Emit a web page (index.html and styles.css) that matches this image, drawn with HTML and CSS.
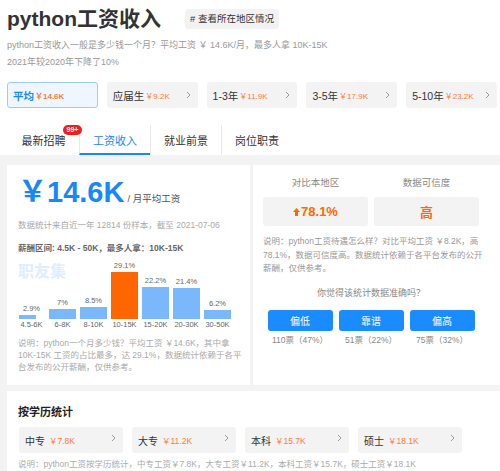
FILE: index.html
```html
<!DOCTYPE html>
<html lang="zh-CN">
<head>
<meta charset="utf-8">
<title>python工资收入</title>
<link rel="stylesheet" href="styles.css">
</head>
<body>
<div class="top">
  <div class="title-row">
    <h1 class="title">python工资收入</h1>
    <span class="tag"># 查看所在地区情况</span>
  </div>
  <p class="sub first">python工资收入一般是多少钱一个月？平均工资 ￥ 14.6K/月，最多人拿 10K-15K</p>
  <p class="sub">2021年较2020年下降了10%</p>
  <div class="filters">
    <div class="filter active"><span class="f-name">平均</span><span class="f-price">￥14.6K</span></div>
    <div class="filter"><span class="f-name">应届生</span><span class="f-price">￥9.2K</span><svg class="chev" width="5" height="8" viewBox="0 0 5 8"><polyline points="1,1 4,4 1,7" fill="none" stroke="#9a9a9a" stroke-width="1"/></svg></div>
    <div class="filter"><span class="f-name">1-3年</span><span class="f-price">￥11.9K</span><svg class="chev" width="5" height="8" viewBox="0 0 5 8"><polyline points="1,1 4,4 1,7" fill="none" stroke="#9a9a9a" stroke-width="1"/></svg></div>
    <div class="filter"><span class="f-name">3-5年</span><span class="f-price">￥17.9K</span><svg class="chev" width="5" height="8" viewBox="0 0 5 8"><polyline points="1,1 4,4 1,7" fill="none" stroke="#9a9a9a" stroke-width="1"/></svg></div>
    <div class="filter"><span class="f-name">5-10年</span><span class="f-price">￥23.2K</span><svg class="chev" width="5" height="8" viewBox="0 0 5 8"><polyline points="1,1 4,4 1,7" fill="none" stroke="#9a9a9a" stroke-width="1"/></svg></div>
  </div>
  <div class="tabs">
    <div class="tab"><span class="tab-label">最新招聘<span class="badge">99+</span></span></div>
    <div class="tab active">工资收入</div>
    <div class="tab">就业前景</div>
    <div class="tab">岗位职责</div>
  </div>
</div>
<div class="main">
  <div class="cards">
    <div class="card left">
      <div class="price-row"><span class="price"><span class="yen">￥</span>14.6K</span><span class="per">/ 月平均工资</span></div>
      <p class="meta">数据统计来自近一年 12814 份样本，截至 2021-07-06</p>
      <p class="range">薪酬区间: 4.5K - 50K，最多人拿：10K-15K</p>
      <div class="chart">
        <span class="watermark">职友集</span>
        <div class="col"><span class="val">2.9%</span><div class="bar narrow" style="height:4px"></div><span class="lab">4.5-6K</span></div>
        <div class="col"><span class="val">7%</span><div class="bar" style="height:10px"></div><span class="lab">6-8K</span></div>
        <div class="col"><span class="val">8.5%</span><div class="bar" style="height:12px"></div><span class="lab">8-10K</span></div>
        <div class="col"><span class="val">29.1%</span><div class="bar hot" style="height:47px"></div><span class="lab">10-15K</span></div>
        <div class="col"><span class="val">22.2%</span><div class="bar" style="height:32px"></div><span class="lab">15-20K</span></div>
        <div class="col"><span class="val">21.4%</span><div class="bar" style="height:31px"></div><span class="lab">20-30K</span></div>
        <div class="col"><span class="val">6.2%</span><div class="bar" style="height:9px"></div><span class="lab">30-50K</span></div>
      </div>
      <p class="note">说明：python一个月多少钱？平均工资 ￥14.6K，其中拿 10K-15K 工资的占比最多，达 29.1%，数据统计依赖于各平台发布的公开薪酬，仅供参考。</p>
    </div>
    <div class="card right">
      <div class="compare">
        <div class="cmp">
          <span class="cmp-label">对比本地区</span>
          <div class="cmp-box"><svg class="up" width="7" height="8" viewBox="0 0 7 8"><polygon points="3.5,0 7,4 5,4 5,8 2,8 2,4 0,4" fill="#ff6a00"/></svg>78.1%</div>
        </div>
        <div class="cmp">
          <span class="cmp-label">数据可信度</span>
          <div class="cmp-box">高</div>
        </div>
      </div>
      <p class="r-note">说明：python工资待遇怎么样？对比平均工资 ￥8.2K，高 78.1%，数据可信度高。数据统计依赖于各平台发布的公开薪酬，仅供参考。</p>
      <p class="question">你觉得该统计数据准确吗？</p>
      <div class="votes">
        <div class="vote"><div class="vote-btn">偏低</div><span class="vote-count">110票（47%）</span></div>
        <div class="vote"><div class="vote-btn">靠谱</div><span class="vote-count">51票（22%）</span></div>
        <div class="vote"><div class="vote-btn">偏高</div><span class="vote-count">75票（32%）</span></div>
      </div>
    </div>
  </div>
  <div class="card edu">
    <h2 class="edu-title">按学历统计</h2>
    <div class="edu-list">
      <div class="edu-item"><span class="edu-name">中专</span><span class="edu-price">￥7.8K</span><svg class="chev" width="5" height="8" viewBox="0 0 5 8"><polyline points="1,1 4,4 1,7" fill="none" stroke="#9a9a9a" stroke-width="1"/></svg></div>
      <div class="edu-item"><span class="edu-name">大专</span><span class="edu-price">￥11.2K</span><svg class="chev" width="5" height="8" viewBox="0 0 5 8"><polyline points="1,1 4,4 1,7" fill="none" stroke="#9a9a9a" stroke-width="1"/></svg></div>
      <div class="edu-item"><span class="edu-name">本科</span><span class="edu-price">￥15.7K</span><svg class="chev" width="5" height="8" viewBox="0 0 5 8"><polyline points="1,1 4,4 1,7" fill="none" stroke="#9a9a9a" stroke-width="1"/></svg></div>
      <div class="edu-item"><span class="edu-name">硕士</span><span class="edu-price">￥18.1K</span><svg class="chev" width="5" height="8" viewBox="0 0 5 8"><polyline points="1,1 4,4 1,7" fill="none" stroke="#9a9a9a" stroke-width="1"/></svg></div>
    </div>
    <p class="edu-note">说明：python工资按学历统计，中专工资￥7.8K，大专工资￥11.2K，本科工资￥15.7K，硕士工资￥18.1K</p>
  </div>
</div>
</body>
</html>
```

FILE: styles.css
```css
* { box-sizing: border-box; }
html, body { margin: 0; padding: 0; }
body {
  font-family: "Liberation Sans", "Noto Sans CJK SC", sans-serif;
  color: #333;
  background: #f3f3f3;
  overflow: hidden;
}
p { margin: 0; }

.top {
  background: #fff;
  padding: 7px 3px 0 7px;
}
.title-row {
  display: flex;
  align-items: center;
  height: 24px;
}
.title {
  margin: 0;
  font-size: 21px;
  font-weight: bold;
  line-height: 24px;
  color: #333;
}
.tag {
  margin-left: 24px;
  height: 20px;
  line-height: 20px;
  padding: 0 5px;
  font-size: 9.5px;
  color: #333;
  background: #f2f2f2;
  border-radius: 3px;
}
.sub {
  font-size: 9px;
  line-height: 17px;
  color: #999;
}
.sub.first { margin-top: 5.5px; }

.filters {
  display: flex;
  gap: 9px;
  margin-top: 11.5px;
}
.filter {
  flex: 1;
  height: 26px;
  display: flex;
  align-items: center;
  padding: 0 6px 0 5px;
  background: #f3f3f3;
  border: 1px solid transparent;
  border-radius: 3px;
}
.f-name { font-size: 10.5px; color: #333; }
.f-price { font-size: 8px; color: #ff7a3d; margin-left: 1px; }
.chev { margin-left: auto; }
.filter.active {
  background: #eef6ff;
  border-color: #9ccafb;
}
.filter.active .f-name { color: #1787fb; font-weight: bold; }
.filter.active .f-price { font-weight: bold; }

.tabs {
  display: flex;
  margin-top: 17px;
  margin-left: 1px;
  height: 30px;
}
.tab {
  width: 71px;
  display: flex;
  align-items: center;
  justify-content: center;
  font-size: 11px;
  color: #333;
}
.tab + .tab { border-left: 1px solid #e8e8e8; }
.tab.active {
  color: #1787fb;
  border-bottom: 2px solid #1787fb;
  padding-top: 2px;
}
.tab-label { position: relative; }
.badge {
  position: absolute;
  left: calc(100% - 3px);
  top: -7px;
  height: 10px;
  line-height: 10px;
  padding: 0 4px;
  border-radius: 5px;
  background: #f01e1e;
  color: #fff;
  font-size: 7px;
  font-weight: bold;
}

.main {
  padding: 10px 0 0 7px;
}
.cards {
  display: flex;
  gap: 3px;
}
.card { background: #fff; }
.card.left {
  width: 243px;
  padding: 12px 12px 12px 11px;
}
.price-row {
  display: flex;
  align-items: baseline;
  line-height: 30px;
}
.price {
  font-size: 29px;
  font-weight: bold;
  color: #1787fb;
}
.per {
  margin-left: 3px;
  font-size: 9.5px;
  color: #555;
}
.meta {
  margin-top: 5px;
  font-size: 8.5px;
  line-height: 12px;
  color: #aaa;
}
.range {
  margin-top: 11px;
  font-size: 8.5px;
  line-height: 12px;
  font-weight: bold;
  color: #666;
}
.chart {
  position: relative;
  display: flex;
  align-items: flex-end;
  gap: 4px;
  margin-top: 7px;
}
.watermark {
  position: absolute;
  left: 0;
  top: 3px;
  font-size: 16px;
  line-height: 16px;
  font-weight: bold;
  color: #e0edff;
}
.col {
  width: 27px;
  display: flex;
  flex-direction: column;
  align-items: center;
  position: relative;
}
.val, .lab {
  font-size: 7.5px;
  line-height: 10px;
  color: #666;
  white-space: nowrap;
}
.val { margin-bottom: 1px; }
.lab { margin-top: 1px; }
.bar {
  width: 100%;
  background: #7ab8fb;
}
.bar.narrow {
  width: 17px;
  align-self: flex-start;
  margin-left: 1px;
}
.bar.hot { background: #ff6600; }
.note {
  margin-top: 7px;
  margin-right: -7px;
  font-size: 8.5px;
  line-height: 12px;
  color: #aaa;
}

.card.right {
  flex: 1;
  padding: 11px 21px 12px 10px;
}
.compare {
  display: flex;
  gap: 6px;
}
.cmp {
  width: 105px;
  display: flex;
  flex-direction: column;
  align-items: center;
}
.cmp-label {
  font-size: 9.5px;
  line-height: 14px;
  color: #888;
}
.cmp-box {
  margin-top: 7px;
  width: 100%;
  height: 29px;
  display: flex;
  align-items: center;
  justify-content: center;
  background: #f3f3f3;
  border-radius: 3px;
  color: #ff6a00;
  font-size: 13px;
  font-weight: bold;
}
.up { margin-right: 1px; }
.r-note {
  margin-top: 9px;
  margin-right: -6px;
  font-size: 8.5px;
  line-height: 13.5px;
  color: #999;
}
.question {
  margin-top: 10px;
  text-align: center;
  font-size: 9px;
  line-height: 14px;
  color: #888;
}
.votes {
  display: flex;
  justify-content: center;
  gap: 6px;
  margin-top: 10px;
}
.vote {
  width: 65px;
  display: flex;
  flex-direction: column;
  align-items: center;
}
.vote-btn {
  width: 100%;
  height: 21px;
  display: flex;
  align-items: center;
  justify-content: center;
  background: #1a8cff;
  border-radius: 3px;
  color: #fff;
  font-size: 10px;
}
.vote-count {
  margin-top: 3px;
  font-size: 8.5px;
  line-height: 12px;
  color: #888;
}

.card.edu {
  margin-top: 6px;
  padding: 13px 0 14px 11px;
}
.edu-title {
  margin: 0;
  font-size: 11px;
  line-height: 16px;
  font-weight: bold;
  color: #222;
}
.edu-list {
  display: flex;
  gap: 9px;
  margin-top: 7px;
  margin-left: 1px;
}
.edu-item {
  width: 104px;
  height: 26px;
  display: flex;
  align-items: center;
  padding: 0 7px 0 6px;
  background: #f3f3f3;
  border-radius: 3px;
}
.edu-item .chev { margin-top: -4px; }
.edu-name { font-size: 10px; color: #333; }
.edu-price { margin-left: 4px; font-size: 8.5px; color: #ff7a3d; }
.edu-note {
  margin-top: 5px;
  font-size: 8.5px;
  line-height: 12px;
  color: #aaa;
}
```
